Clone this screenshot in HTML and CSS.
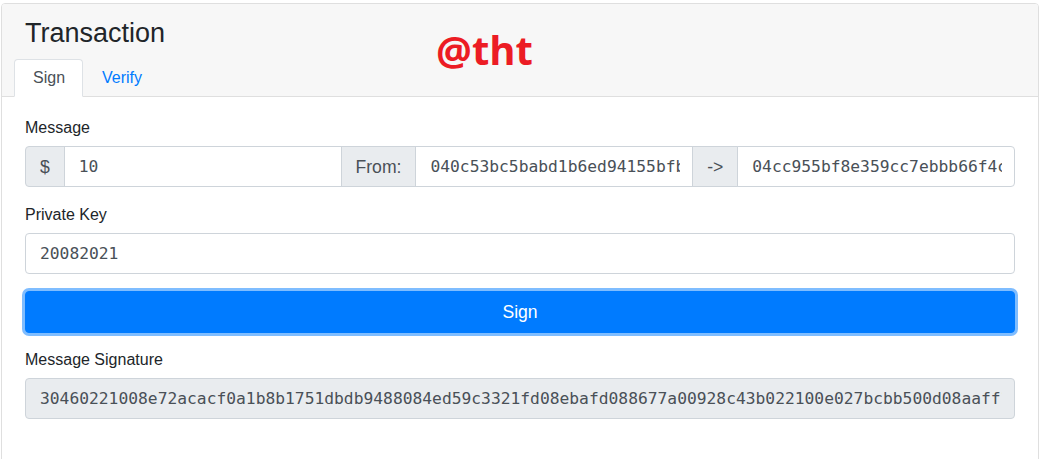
FILE: index.html
```html
<!DOCTYPE html>
<html>
<head>
<meta charset="utf-8">
<title>Transaction</title>
<link rel="stylesheet" href="styles.css">
</head>
<body>
<div class="card">
  <div class="card-header">
    <h3 class="title">Transaction</h3>
    <ul class="tabs">
      <li><a class="tab active">Sign</a></li>
      <li><a class="tab">Verify</a></li>
    </ul>
  </div>
  <div class="watermark">@tht</div>
  <div class="card-body">
    <div class="group">
      <label class="label">Message</label>
      <div class="input-group">
        <span class="addon">$</span>
        <input class="field" value="10">
        <span class="addon">From:</span>
        <input class="field" value="040c53bc5babd1b6ed94155bfb3e1d7a6c0f2b9e4d8a1c5f7e3b2a9d6c4e8f1a0b3">
        <span class="addon">-&gt;</span>
        <input class="field" value="04cc955bf8e359cc7ebbb66f4c2a1d9e7b3f6a8c0d5e4b1a9f2c7d3e6b8a0f4c1d5">
      </div>
    </div>
    <div class="group key-group">
      <label class="label">Private Key</label>
      <input class="field single" value="20082021">
    </div>
    <button class="btn">Sign</button>
    <div class="group">
      <label class="label">Message Signature</label>
      <input class="field single readonly" readonly value="30460221008e72acacf0a1b8b1751dbdb9488084ed59c3321fd08ebafd088677a00928c43b022100e027bcbb500d08aaff1c3e9b27d4a6f0e58c2b7d19a4e3f6c0b58d27a1e9c4f3b6d2">
    </div>
  </div>
</div>
</body>
</html>
```

FILE: styles.css
```css
* { box-sizing: border-box; }

body {
  margin: 3px 6px 0 1px;
  font-family: "Liberation Sans", Arial, sans-serif;
  font-size: 16px;
  line-height: 24px;
  color: #212529;
  background: #fff;
}

.card {
  position: relative;
  border: 1px solid #dfdfdf;
  border-radius: 4px;
  background: #fff;
}

.card-header {
  background: #f7f7f7;
  border-bottom: 1px solid #dfdfdf;
  padding: 12px 23px 0;
  border-radius: 3px 3px 0 0;
}

.title {
  margin: 0 0 9px;
  font-size: 27px;
  line-height: 35px;
  font-weight: 400;
  color: #212529;
}

.tabs {
  list-style: none;
  margin: -1px 0 -1px -11px;
  padding: 0;
  display: flex;
}

.tab {
  display: block;
  padding: 6px 17px 6px 18px;
  border: 1px solid transparent;
  border-radius: 4px 4px 0 0;
  color: #007bff;
  text-decoration: none;
}

.tab.active {
  background: #fff;
  border-color: #dee2e6 #dee2e6 #fff;
  color: #495057;
}

.watermark {
  position: absolute;
  left: 434px;
  top: 26px;
  font-family: "Open Sans", sans-serif;
  font-weight: 700;
  font-size: 40px;
  line-height: 40px;
  color: #ec1c24;
}

.card-body {
  padding: 19px 23px 50px;
}

.label {
  display: block;
  margin-bottom: 6px;
}

.group {
  margin-bottom: 16px;
}

.key-group {
  margin-bottom: 17px;
}

.input-group {
  display: flex;
  height: 41px;
}

.addon {
  display: flex;
  align-items: center;
  padding: 0 14px;
  font-size: 17.6px;
  color: #495057;
  background: #e9ecef;
  border: 1px solid #ced4da;
}

.field {
  flex: 1 1 0;
  min-width: 0;
  height: 41px;
  padding: 0 12px 0 14px;
  border: 1px solid #ced4da;
  font-family: "DejaVu Sans Mono", "Liberation Mono", monospace;
  font-size: 16.3px;
  color: #495057;
  background: #fff;
  outline: none;
}

.input-group > * + * { margin-left: -1px; }
.input-group > :first-child { border-radius: 4px 0 0 4px; }
.input-group > :last-child { border-radius: 0 4px 4px 0; }

.single {
  display: block;
  width: 100%;
  border-radius: 4px;
}

.readonly {
  background: #e9ecef;
}

.btn {
  display: block;
  width: 100%;
  height: 42px;
  margin: 0 0 15px;
  border: 1px solid #007bff;
  border-radius: 4px;
  background: #007bff;
  color: #fff;
  font-family: "Liberation Sans", Arial, sans-serif;
  font-size: 17.6px;
  padding-top: 2px;
  box-shadow: 0 0 0 3px rgba(0, 123, 255, .5);
}
```
